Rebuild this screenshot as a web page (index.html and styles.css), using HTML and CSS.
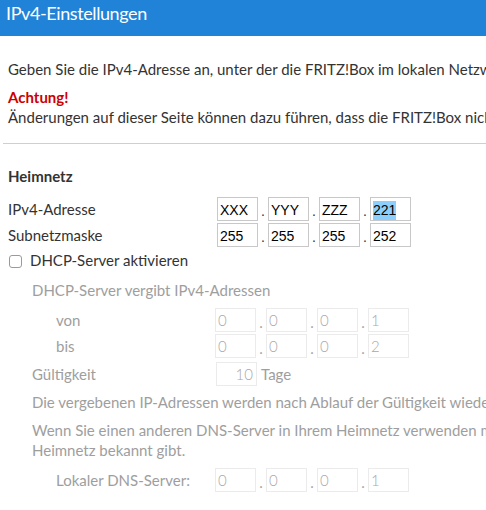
FILE: index.html
```html
<!DOCTYPE html>
<html lang="de">
<head>
<meta charset="utf-8">
<title>IPv4-Einstellungen</title>
<link rel="stylesheet" href="styles.css">
</head>
<body>
<header class="titlebar">IPv4-Einstellungen</header>
<main class="content">
  <p class="intro">Geben Sie die IPv4-Adresse an, unter der die FRITZ!Box im lokalen Netzwerk erreichbar ist.</p>
  <p class="warn"><strong class="alert">Achtung!</strong><br>Änderungen auf dieser Seite können dazu führen, dass die FRITZ!Box nicht mehr erreichbar ist.</p>
  <hr class="sep">
  <h3 class="section">Heimnetz</h3>
  <div class="row">
    <span class="label">IPv4-Adresse</span>
    <div class="ip">
      <span class="box">XXX</span><span class="dot">.</span><span class="box">YYY</span><span class="dot">.</span><span class="box">ZZZ</span><span class="dot">.</span><span class="box"><span class="sel">221</span></span>
    </div>
  </div>
  <div class="row row-gap">
    <span class="label">Subnetzmaske</span>
    <div class="ip">
      <span class="box">255</span><span class="dot">.</span><span class="box">255</span><span class="dot">.</span><span class="box">255</span><span class="dot">.</span><span class="box">252</span>
    </div>
  </div>
  <label class="check"><span class="checkbox"></span>DHCP-Server aktivieren</label>
  <div class="dhcp">
    <p class="sub">DHCP-Server vergibt IPv4-Adressen</p>
    <div class="drow">
      <span class="dlabel indent">von</span>
      <div class="ip">
        <span class="dbox">0</span><span class="ddot">.</span><span class="dbox">0</span><span class="ddot">.</span><span class="dbox">0</span><span class="ddot">.</span><span class="dbox">1</span>
      </div>
    </div>
    <div class="drow drow-gap">
      <span class="dlabel indent">bis</span>
      <div class="ip">
        <span class="dbox">0</span><span class="ddot">.</span><span class="dbox">0</span><span class="ddot">.</span><span class="dbox">0</span><span class="ddot">.</span><span class="dbox">2</span>
      </div>
    </div>
    <div class="drow drow-gap2">
      <span class="dlabel">Gültigkeit</span>
      <div class="ip">
        <span class="dbox num">10</span><span class="unit">Tage</span>
      </div>
    </div>
    <p class="sub note">Die vergebenen IP-Adressen werden nach Ablauf der Gültigkeit wieder freigegeben.</p>
    <p class="sub note2">Wenn Sie einen anderen DNS-Server in Ihrem Heimnetz verwenden möchten, tragen Sie ihn hier ein. Er wird dann vom DHCP-Server im<br>Heimnetz bekannt gibt.</p>
    <div class="drow drow-gap3">
      <span class="dlabel indent">Lokaler DNS-Server:</span>
      <div class="ip">
        <span class="dbox">0</span><span class="ddot">.</span><span class="dbox">0</span><span class="ddot">.</span><span class="dbox">0</span><span class="ddot">.</span><span class="dbox">1</span>
      </div>
    </div>
  </div>
</main>
</body>
</html>
```
FILE: styles.css
```css
html, body {
  margin: 0;
  padding: 0;
  background: #fff;
  overflow: hidden;
}
body {
  font-family: Lato, "Noto Sans", sans-serif;
  font-size: 15px;
  line-height: 20px;
  color: #333;
  width: 486px;
}
.titlebar {
  box-sizing: border-box;
  height: 36px;
  padding: 1px 0 0 6px;
  background: #2183d7;
  color: #fff;
  font-size: 18px;
  line-height: 24px;
  letter-spacing: -0.4px;
  white-space: nowrap;
}
.content {
  padding: 23px 0 0 0;
  white-space: nowrap;
}
.intro, .warn {
  margin: 0 0 8px 8px;
}
.warn { margin-bottom: 0; }
.alert {
  color: #cc0000;
  font-weight: bold;
}
.sep {
  margin: 16px 0 0 3px;
  border: 0;
  border-top: 1px solid #cfcfcf;
  height: 0;
}
.section {
  margin: 22px 0 0 8px;
  font-size: 15px;
  font-weight: bold;
}
.row {
  display: flex;
  align-items: center;
  margin: 11px 0 0 8px;
  height: 24px;
}
.row-gap { margin-top: 2px; }
.label {
  width: 209px;
  flex: none;
}
.ip {
  display: flex;
  align-items: center;
}
.box {
  box-sizing: border-box;
  width: 41px;
  height: 24px;
  border: 1px solid #c8c8c8;
  padding: 2px 0 0 2px;
  font-family: "Liberation Sans", Arial, sans-serif;
  font-size: 14px;
  line-height: 20px;
  color: #000;
}
.sel {
  background: #8dcffc;
  display: inline-block;
  line-height: 19px;
}
.dot {
  width: 10px;
  text-align: center;
  font-family: "Liberation Sans", Arial, sans-serif;
  font-size: 14px;
  color: #333;
  padding-top: 4px;
}
.check {
  display: flex;
  align-items: center;
  margin: 3px 0 0 9px;
  height: 20px;
}
.checkbox {
  box-sizing: border-box;
  width: 13px;
  height: 13px;
  border: 1px solid #9a9a9a;
  border-radius: 3px;
  margin: 2px 8px 0 0;
  background: #fff;
}
.dhcp {
  color: #9e9e9e;
}
.sub {
  margin: 10px 0 0 32px;
}
.drow {
  display: flex;
  align-items: center;
  height: 24px;
  margin: 8px 0 0 32px;
}
.drow-gap { margin-top: 2px; }
.drow-gap2 { margin-top: 4px; }
.drow-gap3 { margin-top: 8px; }
.dlabel {
  width: 183px;
  flex: none;
}
.indent {
  padding-left: 24px;
  width: 159px;
}
.dbox {
  box-sizing: border-box;
  width: 41px;
  height: 24px;
  border: 1px solid #ebebeb;
  padding: 1px 0 0 2px;
  line-height: 21px;
  color: #a8a8a8;
  font-weight: 300;
}
.ddot {
  width: 10px;
  text-align: center;
  color: #a8a8a8;
  padding-top: 3px;
}
.num {
  text-align: right;
  padding: 1px 3px 0 0;
  margin-left: 1px;
}
.unit {
  margin-left: 4px;
}
.note { margin-top: 6px; }
.note2 { margin-top: 8px; }
```
